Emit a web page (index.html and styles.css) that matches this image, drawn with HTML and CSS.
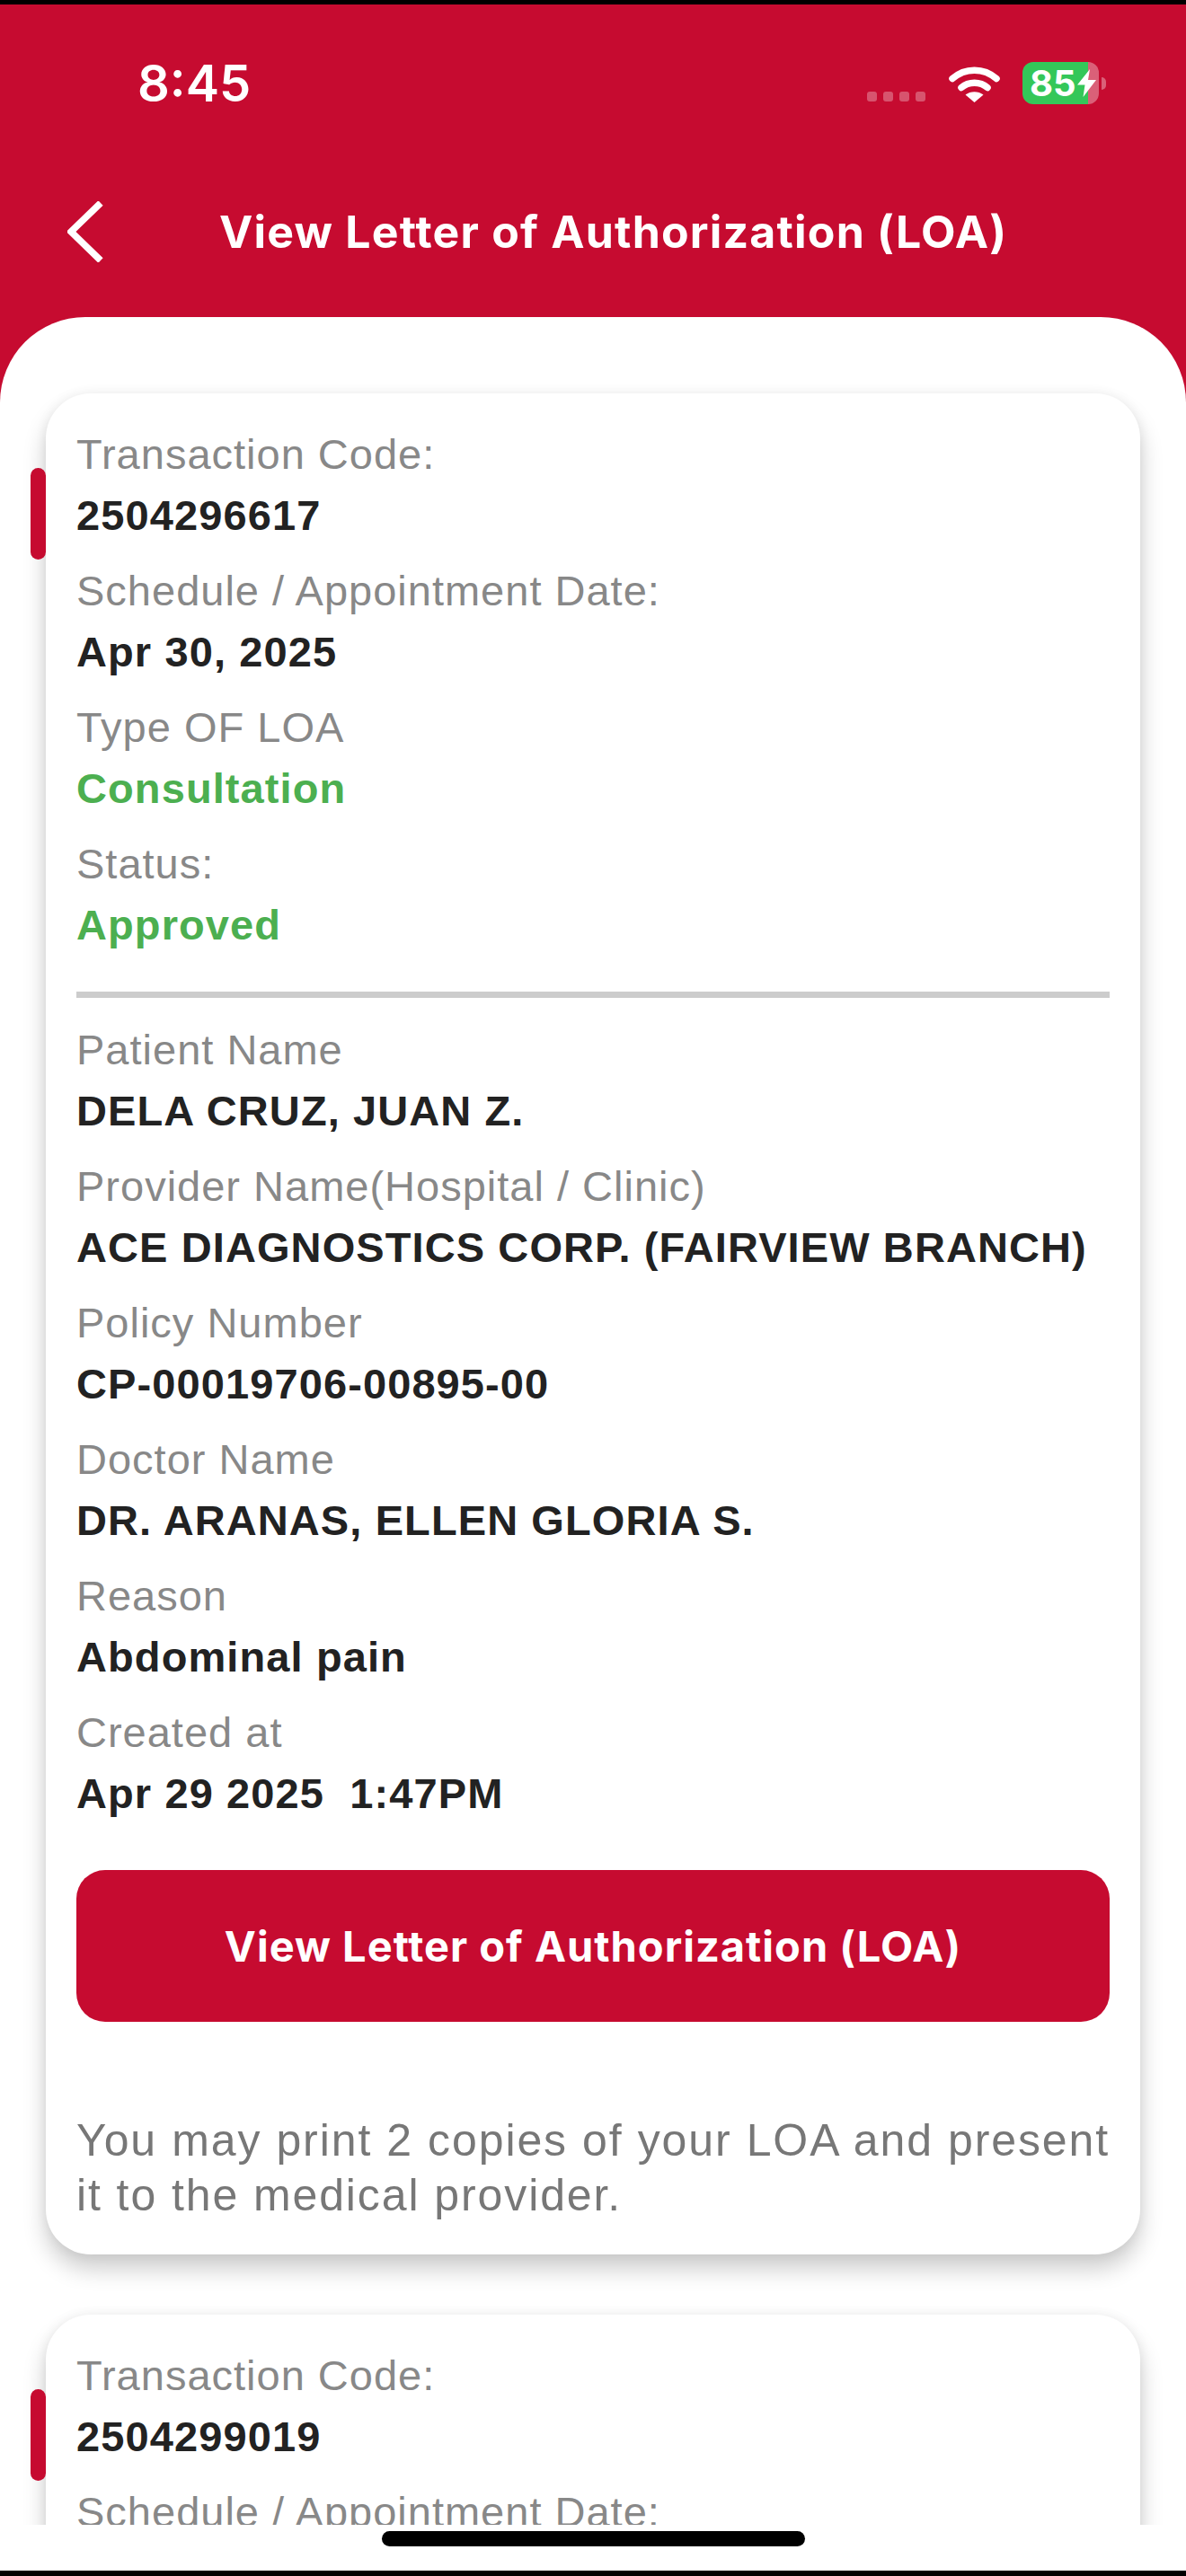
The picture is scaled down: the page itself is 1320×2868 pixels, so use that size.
FILE: index.html
```html
<!DOCTYPE html>
<html lang="en">
<head>
  <meta charset="UTF-8">
  <meta name="viewport" content="width=device-width, initial-scale=1.0">
  <title>View Letter of Authorization (LOA)</title>
  <link rel="stylesheet" href="styles.css">
</head>
<body>
  <div class="screen">
    <header class="top">
      <div class="status">
        <span class="clock">8:45</span>
        <div class="status-right">
          <div class="signal"><i></i><i></i><i></i><i></i></div>
          <svg class="wifi" width="57" height="42" viewBox="0 0 57 42">
            <path d="M4 15.5C18 3 39 3 53 15.5" fill="none" stroke="#fff" stroke-width="7.5" stroke-linecap="round"/>
            <path d="M14 25.5C22 18.5 35 18.5 43 25.5" fill="none" stroke="#fff" stroke-width="7.5" stroke-linecap="round"/>
            <path d="M18.5 33.5C24 29 33 29 38.5 33.5L28.5 42Z" fill="#fff"/>
          </svg>
          <div class="battery">
            <div class="battery-body">
              <span class="battery-num">85</span>
              <svg class="bolt" width="21" height="31" viewBox="0 0 21 31">
                <path d="M14 0L0 17.5H8.5L6.5 31L21 12H12Z" fill="#fff"/>
              </svg>
            </div>
            <div class="battery-nub"></div>
          </div>
        </div>
      </div>
      <div class="titlebar">
        <svg class="back" width="40" height="68" viewBox="0 0 40 68">
          <path d="M37 2L4 34L37 66" fill="none" stroke="#fff" stroke-width="7.5"/>
        </svg>
        <h1 class="title">View Letter of Authorization (LOA)</h1>
      </div>
    </header>

    <main class="sheet">
      <section class="card">
        <span class="marker"></span>
        <div class="row"><div class="label">Transaction Code:</div><div class="value">2504296617</div></div>
        <div class="row"><div class="label">Schedule / Appointment Date:</div><div class="value">Apr 30, 2025</div></div>
        <div class="row"><div class="label">Type OF LOA</div><div class="value green">Consultation</div></div>
        <div class="row"><div class="label">Status:</div><div class="value green">Approved</div></div>
        <hr class="divider">
        <div class="row"><div class="label">Patient Name</div><div class="value">DELA CRUZ, JUAN Z.</div></div>
        <div class="row"><div class="label">Provider Name(Hospital / Clinic)</div><div class="value">ACE DIAGNOSTICS CORP. (FAIRVIEW BRANCH)</div></div>
        <div class="row"><div class="label">Policy Number</div><div class="value">CP-00019706-00895-00</div></div>
        <div class="row"><div class="label">Doctor Name</div><div class="value">DR. ARANAS, ELLEN GLORIA S.</div></div>
        <div class="row"><div class="label">Reason</div><div class="value">Abdominal pain</div></div>
        <div class="row"><div class="label">Created at</div><div class="value">Apr 29 2025&nbsp; 1:47PM</div></div>
        <button class="loa-btn" type="button">View Letter of Authorization (LOA)</button>
        <p class="note">You may print 2 copies of your LOA and present it to the medical provider.</p>
      </section>

      <section class="card">
        <span class="marker"></span>
        <div class="row"><div class="label">Transaction Code:</div><div class="value">2504299019</div></div>
        <div class="row"><div class="label">Schedule / Appointment Date:</div></div>
      </section>
    </main>

    <footer class="home"><span class="home-bar"></span></footer>
  </div>
</body>
</html>
```

FILE: styles.css
```css
* {
  box-sizing: border-box;
}
html, body {
  margin: 0;
  padding: 0;
}
body {
  width: 1320px;
  height: 2868px;
  overflow: hidden;
  font-family: "Liberation Sans", Arial, sans-serif;
  background-color: #000;
}
.screen {
  height: 2868px;
  display: flex;
  flex-direction: column;
  background-color: #c60b30;
  border-top: 5px solid #000;
  border-bottom: 6px solid #000;
}

/* header */
.top {
  height: 348px;
  flex-shrink: 0;
  color: #fff;
}
.status {
  height: 110px;
  padding: 36px 89px 0 153px;
  display: flex;
  justify-content: space-between;
  align-items: flex-start;
}
.clock {
  margin-top: 22px;
  font-family: Inter, sans-serif;
  font-weight: 600;
  font-size: 56px;
  line-height: 60px;
}
.status-right {
  display: flex;
  align-items: flex-start;
}
.signal {
  display: flex;
  gap: 7px;
  margin: 61px 26px 0 0;
}
.signal i {
  width: 11px;
  height: 11px;
  border-radius: 3px;
  background-color: rgba(255, 255, 255, 0.3);
}
.wifi {
  margin: 31px 25px 0 0;
}
.battery {
  display: flex;
  align-items: center;
  margin-top: 28px;
}
.battery-body {
  width: 85px;
  height: 47px;
  padding-left: 8px;
  display: flex;
  align-items: center;
  border-radius: 12px;
  background: linear-gradient(to right, #34c759 86%, rgba(255, 255, 255, 0.35) 86%);
}
.battery-num {
  font-family: Inter, sans-serif;
  font-weight: 700;
  font-size: 40px;
  line-height: 47px;
}
.bolt {
  margin-left: 1px;
}
.battery-nub {
  width: 5px;
  height: 14px;
  margin-left: 3px;
  border-radius: 0 5px 5px 0;
  background-color: rgba(255, 255, 255, 0.35);
}
.titlebar {
  height: 106px;
  margin-top: 90px;
  padding-left: 75px;
  display: flex;
  align-items: center;
}
.title {
  margin: 0 0 0 129px;
  font-family: Inter, sans-serif;
  font-weight: 700;
  font-size: 50px;
  line-height: 60px;
  letter-spacing: 1.2px;
  white-space: nowrap;
}

/* white sheet */
.sheet {
  flex: 1;
  min-height: 0;
  overflow: hidden;
  padding: 85px 51px 0;
  background-color: #fff;
  border-radius: 95px 95px 0 0;
}
.card {
  position: relative;
  margin-bottom: 67px;
  padding: 38px 34px 35px;
  background-color: #fff;
  border-radius: 50px;
  box-shadow: 0 16px 26px rgba(0, 0, 0, 0.2), 0 0 14px rgba(0, 0, 0, 0.06);
}
.marker {
  position: absolute;
  left: -17px;
  top: 83px;
  width: 17px;
  height: 102px;
  background-color: #c60b30;
  border-radius: 9px;
}
.row {
  margin-bottom: 24px;
}
.label {
  color: #888;
  font-size: 47px;
  line-height: 60px;
  letter-spacing: 1px;
  white-space: nowrap;
}
.value {
  margin-top: 8px;
  color: #222;
  font-size: 47px;
  font-weight: 700;
  line-height: 60px;
  letter-spacing: 1.1px;
  white-space: nowrap;
}
.green {
  color: #4caf50;
}
.divider {
  height: 7px;
  margin: 44px 0 28px;
  border: 0;
  background-color: #ccc;
}
.loa-btn {
  display: block;
  width: 100%;
  height: 169px;
  margin-top: 55px;
  border: 0;
  border-radius: 32px;
  background-color: #c60b30;
  color: #fff;
  font-family: Inter, sans-serif;
  font-weight: 700;
  font-size: 47px;
  letter-spacing: 1px;
}
.note {
  margin: 102px 0 0;
  color: #777;
  font-size: 50px;
  line-height: 61px;
  letter-spacing: 1.9px;
  text-align: justify;
}

/* home indicator */
.home {
  height: 51px;
  flex-shrink: 0;
  padding-top: 7px;
  display: flex;
  justify-content: center;
  background-color: #fff;
}
.home-bar {
  width: 471px;
  height: 17px;
  border-radius: 9px;
  background-color: #000;
}
```
